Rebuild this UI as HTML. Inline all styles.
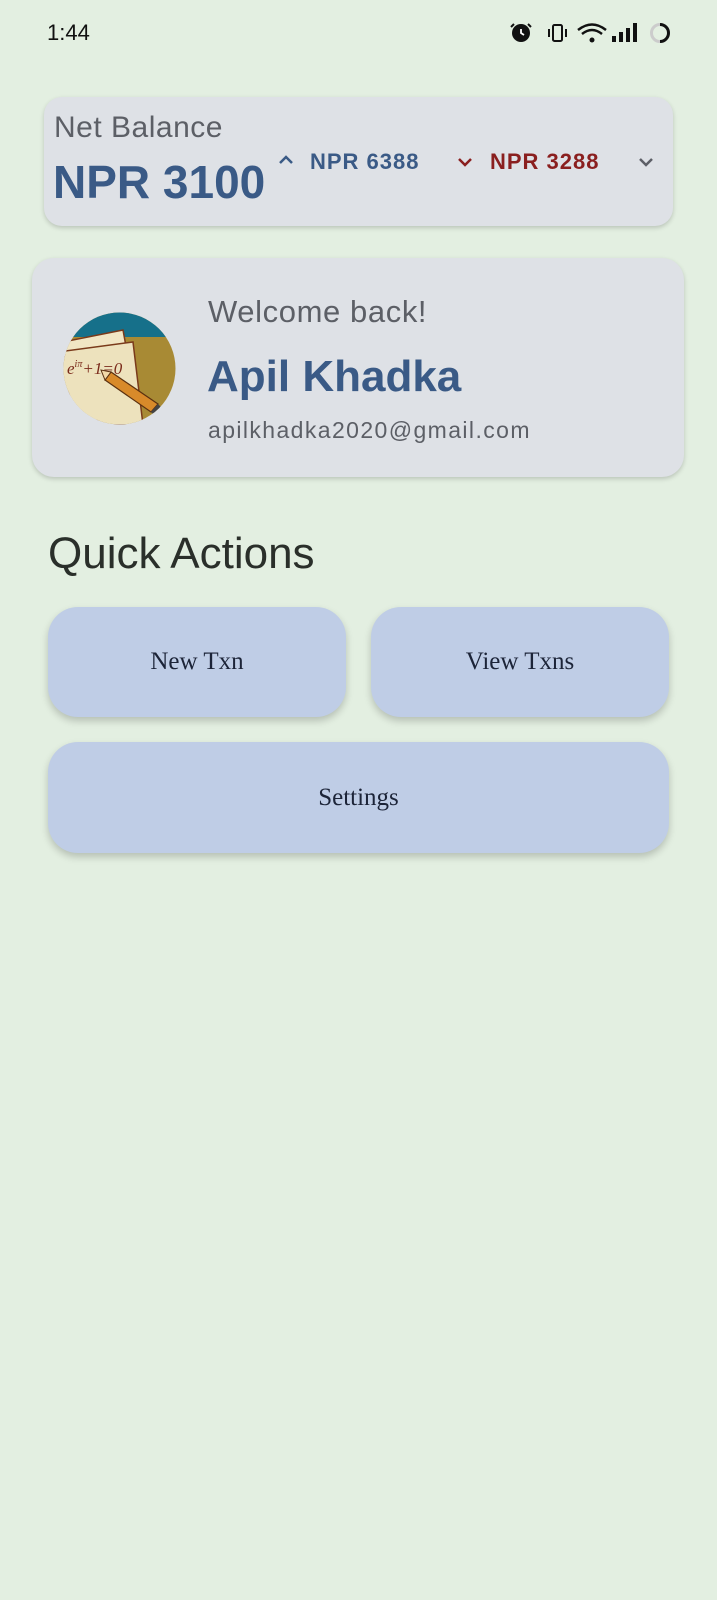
<!DOCTYPE html>
<html><head><meta charset="utf-8"><style>
*{margin:0;padding:0;box-sizing:border-box}
body{width:717px;height:1600px;background:#e3efe1;font-family:"Liberation Sans",sans-serif;position:relative;overflow:hidden}
.abs{position:absolute}
.card{background:#dee1e6;border-radius:18px;box-shadow:0 2px 5px rgba(0,0,0,.18)}
.btn{background:#bfcde6;border-radius:30px;box-shadow:0 4px 8px rgba(0,0,0,.2);display:flex;align-items:center;justify-content:center;font-family:"Liberation Serif",serif;font-size:25px;color:#1c2438}
</style></head><body>
<div class="abs" style="left:47px;top:20px;font-size:22px;color:#111">1:44</div>
<svg class="abs" style="left:508px;top:20px" width="168" height="26" viewBox="0 0 168 26">
<circle cx="13" cy="13" r="9" fill="#111"/><path d="M6 4 L3 7 M20 4 L23 7" stroke="#111" stroke-width="2"/><path d="M13 9 V13 L16 15" stroke="#fff" stroke-width="1.8" fill="none"/>
<rect x="45" y="5" width="9" height="16" rx="1.5" fill="none" stroke="#111" stroke-width="2"/><path d="M41 9v8M58 9v8" stroke="#111" stroke-width="2"/>
<path d="M70 10 Q84 -1 98 10" stroke="#111" stroke-width="2.5" fill="none"/><path d="M74 14 Q84 6 94 14" stroke="#111" stroke-width="2.5" fill="none"/><circle cx="84" cy="20" r="2.5" fill="#111"/>
<rect x="104" y="16" width="4" height="6" fill="#111"/><rect x="111" y="12" width="4" height="10" fill="#111"/><rect x="118" y="8" width="4" height="14" fill="#111"/><rect x="125" y="3" width="4" height="19" fill="#111"/>
<circle cx="152" cy="13" r="8.5" fill="none" stroke="#ccc" stroke-width="3"/><path d="M152 4.5 A8.5 8.5 0 0 1 152 21.5" fill="none" stroke="#111" stroke-width="3"/>
</svg>
<div class="abs card" style="left:44px;top:97px;width:629px;height:129px"></div>
<div class="abs" style="left:54px;top:111px;font-size:30px;color:#5c5f66;letter-spacing:.5px">Net Balance</div>
<div class="abs" style="left:53px;top:155px;font-size:46px;font-weight:bold;color:#3a5a86">NPR 3100</div>
<svg class="abs" style="left:278px;top:154px" width="16" height="12"><path d="M2 9 L8 3 L14 9" stroke="#3a5a86" stroke-width="2.5" fill="none"/></svg>
<div class="abs" style="left:310px;top:149px;font-size:22px;font-weight:bold;color:#3a5a86;letter-spacing:1px">NPR 6388</div>
<svg class="abs" style="left:457px;top:156px" width="16" height="12"><path d="M2 3 L8 9 L14 3" stroke="#8a1f1f" stroke-width="2.5" fill="none"/></svg>
<div class="abs" style="left:490px;top:149px;font-size:22px;font-weight:bold;color:#8a1f1f;letter-spacing:1px">NPR 3288</div>
<svg class="abs" style="left:638px;top:156px" width="16" height="12"><path d="M2 3 L8 9 L14 3" stroke="#5c5f66" stroke-width="2.5" fill="none"/></svg>

<div class="abs card" style="left:32px;top:258px;width:652px;height:219px;border-radius:22px"></div>
<svg class="abs" style="left:63px;top:312px" width="113" height="113" viewBox="0 0 113 113">
<defs><clipPath id="c"><circle cx="56.5" cy="56.5" r="56"/></clipPath></defs>
<g clip-path="url(#c)"><rect width="113" height="113" fill="#a88a34"/><rect width="113" height="25" fill="#16708a"/>
<path d="M0 30 L60 18 L75 100 L10 113 Z" fill="#f1e6c4" stroke="#7a3a1a" stroke-width="1.5"/>
<path d="M-5 40 L70 30 L80 113 L0 113 Z" fill="#ede2bd" stroke="#7a3a1a" stroke-width="1.5"/>
<text x="4" y="62" font-family="Liberation Serif" font-style="italic" font-size="17" fill="#7a2a1a">e<tspan font-size="10" dy="-7">iπ</tspan><tspan dy="7">+1=0</tspan></text>
<path d="M48 60 L95 92 L88 100 L42 68 Z" fill="#d88a2a" stroke="#5a3010" stroke-width="1.2"/><path d="M42 68 L48 60 L38 58 Z" fill="#f2d9a8" stroke="#5a3010"/><path d="M88 100 L95 92 L99 96 L92 104Z" fill="#444"/></g></svg>
<div class="abs" style="left:208px;top:294px;font-size:31px;color:#5c5f66;letter-spacing:.6px">Welcome back!</div>
<div class="abs" style="left:207px;top:352px;font-size:44px;font-weight:bold;color:#3a5a86">Apil Khadka</div>
<div class="abs" style="left:208px;top:417px;font-size:23px;color:#5c5f66;letter-spacing:1.4px">apilkhadka2020@gmail.com</div>

<div class="abs" style="left:48px;top:529px;font-size:44px;color:#2a2f2a">Quick Actions</div>
<div class="abs btn" style="left:48px;top:607px;width:298px;height:110px">New Txn</div>
<div class="abs btn" style="left:371px;top:607px;width:298px;height:110px">View Txns</div>
<div class="abs btn" style="left:48px;top:742px;width:621px;height:111px">Settings</div>
</body></html>
